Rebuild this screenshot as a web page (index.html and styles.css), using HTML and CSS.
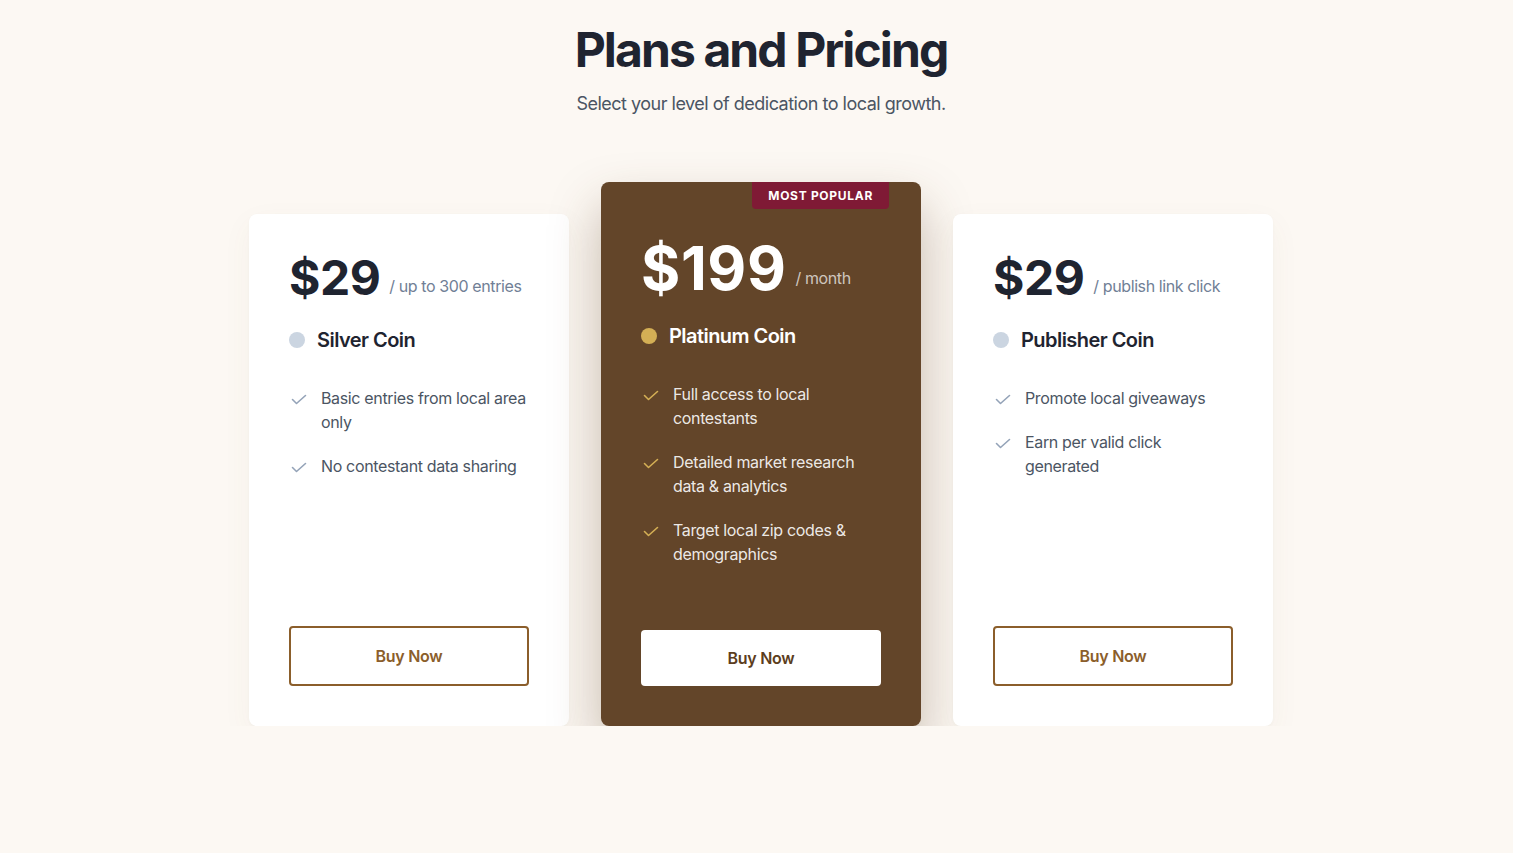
FILE: index.html
```html
<!DOCTYPE html>
<html lang="en">
<head>
    <meta charset="UTF-8">
    <meta name="viewport" content="width=device-width, initial-scale=1.0">
    <title>Plans and Pricing</title>
    <link rel="stylesheet" href="styles.css">
</head>
<body>
    <div class="page">
        <div class="header">
            <h1>Plans and Pricing</h1>
            <p class="subtitle">Select your level of dedication to local growth.</p>
        </div>

        <div class="plans">
            <!-- Silver -->
            <div class="plan">
                <div class="price-row">
                    <span class="price">$29</span>
                    <span class="per">/ up to 300 entries</span>
                </div>
                <div class="coin">
                    <span class="dot"></span>
                    <span class="coin-name">Silver Coin</span>
                </div>
                <ul class="features">
                    <li>
                        <svg class="check" viewBox="0 0 16 11"><path d="M1.5 5.5l4 4L14.5 1.5"/></svg>
                        <span>Basic entries from local area only</span>
                    </li>
                    <li>
                        <svg class="check" viewBox="0 0 16 11"><path d="M1.5 5.5l4 4L14.5 1.5"/></svg>
                        <span>No contestant data sharing</span>
                    </li>
                </ul>
                <button class="btn">Buy Now</button>
            </div>

            <!-- Platinum -->
            <div class="plan plan-popular">
                <div class="badge">MOST POPULAR</div>
                <div class="price-row">
                    <span class="price">$199</span>
                    <span class="per">/ month</span>
                </div>
                <div class="coin">
                    <span class="dot"></span>
                    <span class="coin-name">Platinum Coin</span>
                </div>
                <ul class="features">
                    <li>
                        <svg class="check" viewBox="0 0 16 11"><path d="M1.5 5.5l4 4L14.5 1.5"/></svg>
                        <span>Full access to local contestants</span>
                    </li>
                    <li>
                        <svg class="check" viewBox="0 0 16 11"><path d="M1.5 5.5l4 4L14.5 1.5"/></svg>
                        <span>Detailed market research data &amp; analytics</span>
                    </li>
                    <li>
                        <svg class="check" viewBox="0 0 16 11"><path d="M1.5 5.5l4 4L14.5 1.5"/></svg>
                        <span>Target local zip codes &amp; demographics</span>
                    </li>
                </ul>
                <button class="btn">Buy Now</button>
            </div>

            <!-- Publisher -->
            <div class="plan">
                <div class="price-row">
                    <span class="price">$29</span>
                    <span class="per">/ publish link click</span>
                </div>
                <div class="coin">
                    <span class="dot"></span>
                    <span class="coin-name">Publisher Coin</span>
                </div>
                <ul class="features">
                    <li>
                        <svg class="check" viewBox="0 0 16 11"><path d="M1.5 5.5l4 4L14.5 1.5"/></svg>
                        <span>Promote local giveaways</span>
                    </li>
                    <li>
                        <svg class="check" viewBox="0 0 16 11"><path d="M1.5 5.5l4 4L14.5 1.5"/></svg>
                        <span>Earn per valid click generated</span>
                    </li>
                </ul>
                <button class="btn">Buy Now</button>
            </div>
        </div>
    </div>
</body>
</html>
```

FILE: styles.css
```css
* {
    box-sizing: border-box;
}
body {
    margin: 0;
    font-family: Inter, "Noto Sans", sans-serif;
    background-color: #fcf8f3;
    color: #1f2430;
}
.page {
    padding: 26px 0 0 9px;
}
.header {
    text-align: center;
}
h1 {
    margin: 0;
    font-size: 48px;
    line-height: 48px;
    font-weight: 700;
    letter-spacing: -1.9px;
    color: #1f2430;
}
.subtitle {
    margin: 16px 0 0;
    font-size: 18px;
    line-height: 28px;
    letter-spacing: -0.5px;
    color: #4b5563;
}
.plans {
    display: flex;
    justify-content: center;
    align-items: flex-end;
    gap: 32px;
    margin-top: 64px;
}
.plan {
    position: relative;
    display: flex;
    flex-direction: column;
    width: 320px;
    height: 512px;
    padding: 40px;
    background: white;
    border-radius: 8px;
    box-shadow: 0 1px 3px rgba(0,0,0,0.03), 0 10px 30px rgba(120,90,50,0.05);
}
.price-row {
    display: flex;
    align-items: flex-end;
    gap: 9px;
}
.price {
    font-size: 48px;
    line-height: 48px;
    font-weight: 700;
    letter-spacing: -0.5px;
    color: #1f2430;
}
.per {
    margin-bottom: 4px;
    font-size: 16px;
    line-height: 24px;
    letter-spacing: -0.4px;
    color: #718096;
}
.coin {
    display: flex;
    align-items: center;
    gap: 12px;
    margin-top: 24px;
}
.dot {
    width: 16px;
    height: 16px;
    border-radius: 50%;
    background: #cbd5e1;
}
.coin-name {
    font-size: 20px;
    line-height: 28px;
    font-weight: 600;
    letter-spacing: -0.55px;
    color: #1f2430;
}
.features {
    list-style: none;
    margin: 32px 0 0;
    padding: 0;
    display: flex;
    flex-direction: column;
    gap: 20px;
}
.features li {
    display: flex;
    align-items: flex-start;
    gap: 14px;
    font-size: 16px;
    line-height: 24px;
    letter-spacing: -0.35px;
    color: #4b5563;
}
.check {
    flex: none;
    width: 16px;
    height: 11px;
    margin-top: 8px;
    margin-left: 2px;
    fill: none;
    stroke: #94a3b8;
    stroke-width: 1.6;
    stroke-linecap: round;
    stroke-linejoin: round;
}
.btn {
    margin-top: auto;
    height: 60px;
    width: 100%;
    background: white;
    border: 2px solid #8b5e2b;
    border-radius: 4px;
    font-family: inherit;
    font-size: 16px;
    font-weight: 600;
    letter-spacing: -0.3px;
    color: #8b5e2b;
    cursor: pointer;
}

/* popular card */
.plan-popular {
    height: 544px;
    padding-top: 56px;
    background: #634529;
    box-shadow: 0 25px 50px rgba(90,60,30,0.34);
}
.plan-popular .price {
    font-size: 60px;
    line-height: 60px;
    letter-spacing: 0.6px;
    color: white;
}
.plan-popular .per {
    margin-bottom: 8px;
    color: rgba(255,255,255,0.7);
}
.plan-popular .dot {
    background: #d4af55;
}
.plan-popular .coin-name {
    color: white;
}
.plan-popular .features li {
    color: rgba(255,255,255,0.9);
}
.plan-popular .check {
    stroke: #d4af55;
}
.plan-popular .btn {
    height: 56px;
    border: none;
    color: #5c3d20;
}
.badge {
    position: absolute;
    top: 0;
    right: 32px;
    padding: 6px 16px;
    background: #7f1a35;
    color: white;
    font-size: 12px;
    line-height: 15px;
    font-weight: 700;
    letter-spacing: 0.7px;
    border-radius: 0 0 4px 4px;
}
```
